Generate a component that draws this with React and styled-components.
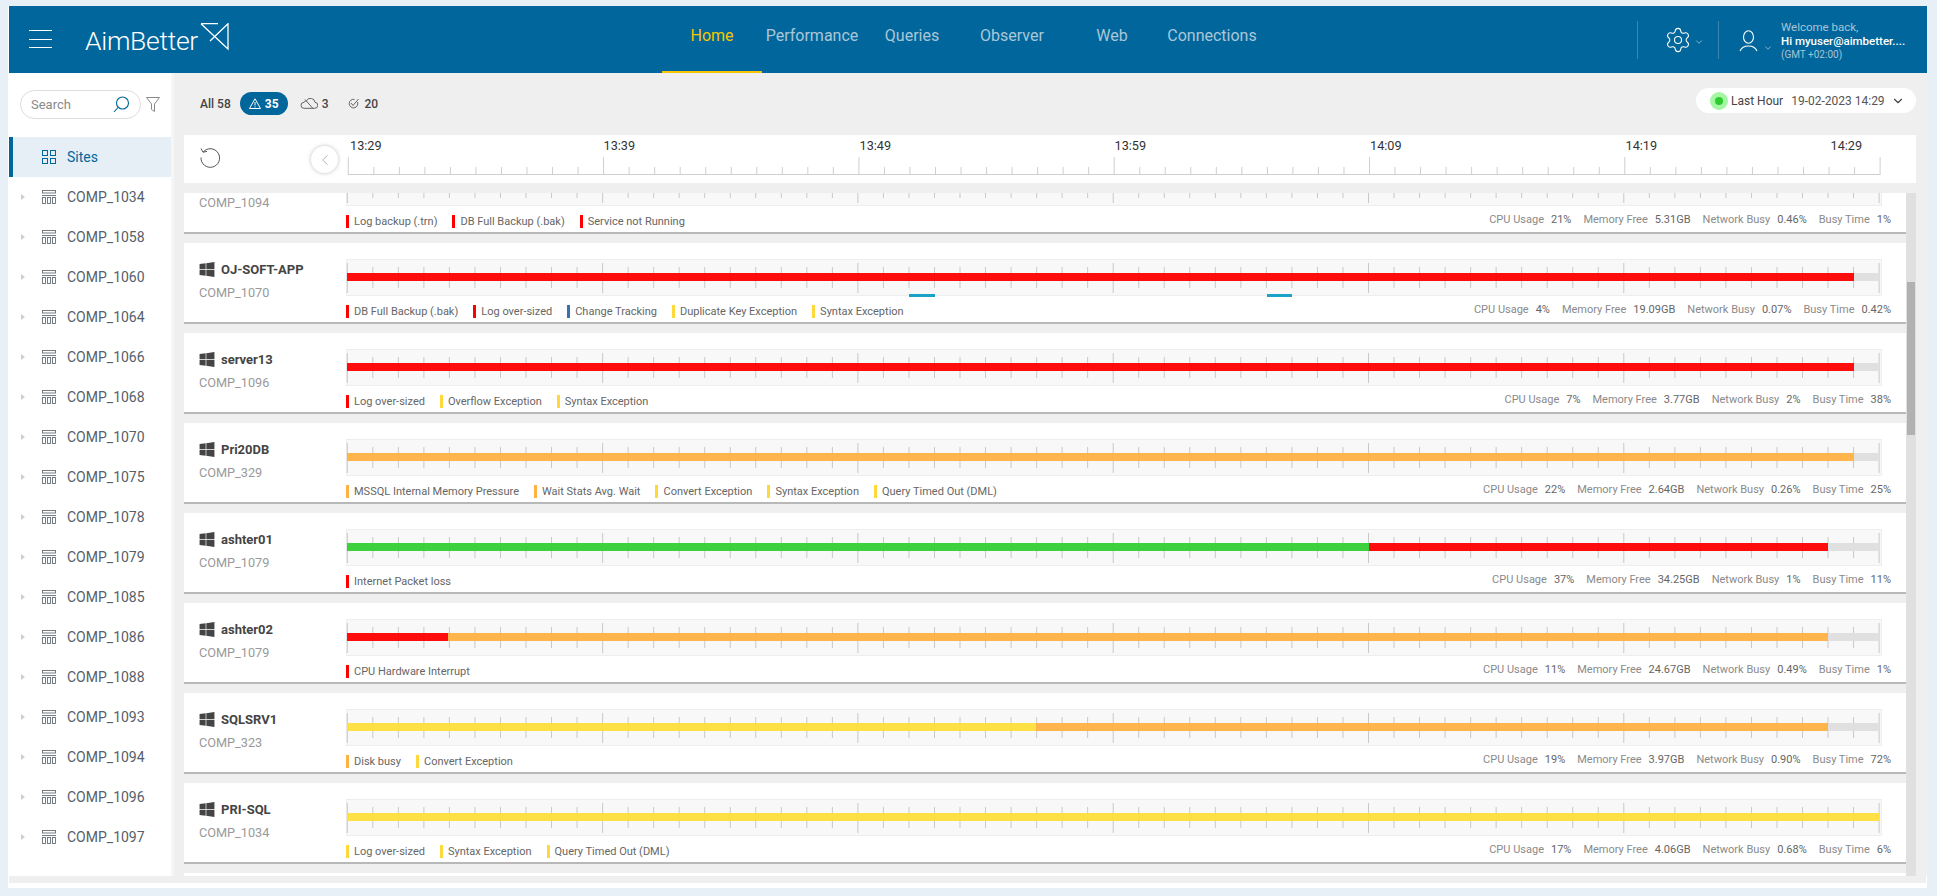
import React from 'react';
import styled, { createGlobalStyle } from 'styled-components';
import { FaWindows } from 'react-icons/fa';
import { Settings, ChevronDown, ChevronLeft } from 'lucide-react';

const Global = createGlobalStyle`
  html, body { margin: 0; padding: 0; height: 100%; overflow: hidden; background: #e7f0f7; }
  body { font-family: Roboto, "Liberation Sans", sans-serif; }
  * { box-sizing: border-box; }
`;

const Page = styled.div`
  width: 1937px; height: 896px; padding: 6px 10px 8px 8px;
`;
const Frame = styled.div`
  width: 1919px; height: 882px; background: #fff; padding-left: 1px;
  display: flex; flex-direction: column;
`;

/* header */
const Header = styled.header`
  height: 67px; flex: none; background: #00669b; display: flex; align-items: stretch; position: relative;
`;
const Burger = styled.div`
  width: 23px; margin: 24px 0 0 20px; height: 18px; flex: none;
  display: flex; flex-direction: column; justify-content: space-between;
  span { display: block; height: 1px; background: #fff; }
`;
const Logo = styled.div`
  margin-left: 33px; width: 145px; flex: none; display: flex; align-items: flex-start; padding-top: 17px;
`;
const LogoText = styled.span`
  font-size: 26.5px; font-weight: 300; color: #fff; letter-spacing: -0.3px; line-height: 36px; width: 115px; flex: none;
`;
const LogoMark = styled.svg`
  width: 30px; height: 30px; margin-top: 0; flex: none;
`;
const Nav = styled.nav`
  margin-left: 432px; display: flex; flex: none;
`;
const NavItem = styled.div`
  width: 100px; height: 67px; padding-top: 20px; text-align: center; font-size: 16px; line-height: 19px;
  color: ${p => (p.$active ? '#f7c600' : '#aac6d9')};
  border-bottom: 2px solid ${p => (p.$active ? '#f7c600' : 'transparent')};
`;
const HeaderRight = styled.div`
  margin-left: 375px; display: flex; flex: none; align-items: flex-start;
`;
const VLine = styled.div`
  width: 1px; height: 38px; margin-top: 15px; background: #3a88b0; flex: none;
`;
const GearWrap = styled.div`
  width: 80px; flex: none; padding: 20px 0 0 26px; display: flex; align-items: flex-start; color: #fff;
`;
const SmallChev = styled.div`
  color: #9fc0d5; display: flex; margin: ${p => p.$m};
`;
const UserWrap = styled.div`
  display: flex; flex: none; align-items: flex-start; padding: 24px 0 0 20px; color: #fff;
`;
const Welcome = styled.div`
  margin-left: 8px; margin-top: -10px; display: flex; flex-direction: column; width: 130px;
`;
const W1 = styled.div` font-size: 11.5px; line-height: 14px; color: #a7c4d7; `;
const W2 = styled.div` font-size: 11.5px; line-height: 14px; color: #fff; font-weight: 500; white-space: nowrap; `;
const W3 = styled.div` font-size: 10px; line-height: 13px; color: #a7c4d7; margin-top: 0; `;

/* body */
const Body = styled.div`
  flex: 1; min-height: 0; display: flex;
`;
const Sidebar = styled.aside`
  width: 165px; flex: none; background: #fff; border-right: 3px solid #f6f6f6; overflow: hidden;
`;
const SearchRow = styled.div`
  display: flex; align-items: center; padding: 17px 0 0 11px; height: 64px; align-items: flex-start;
`;
const SearchBox = styled.div`
  width: 121px; height: 29px; border: 1px solid #ddd; border-radius: 15px; display: flex; align-items: center;
  padding: 0 10px 0 10px; justify-content: space-between; font-size: 13px; color: #8a8a8a;
`;
const FunnelIcon = styled.svg`
  width: 14px; height: 15px; margin: 7px 0 0 5px; flex: none;
`;
const SiteRow = styled.div`
  height: 40px; display: flex; align-items: center; background: ${p => (p.$active ? '#e6eff6' : 'transparent')};
  border-left: 4px solid ${p => (p.$active ? '#00669b' : 'transparent')};
  padding-left: 8px; font-size: 14px; color: ${p => (p.$active ? '#00669b' : '#55606a')};
  width: 162px;
`;
const Caret = styled.span`
  width: 0; height: 0; border-left: 4px solid ${p => (p.$hidden ? 'transparent' : '#cfcfcf')};
  border-top: 3.5px solid transparent; border-bottom: 3.5px solid transparent; flex: none; margin-right: 17px;
`;
const SiteIcon = styled.svg`
  width: 14px; height: 14px; flex: none; margin-right: 11px;
`;

const Main = styled.main`
  flex: 1; min-width: 0; background: #efefef; padding: 0 11px 0 10px; display: flex; flex-direction: column;
`;
const Filters = styled.div`
  height: 62px; flex: none; display: flex; align-items: flex-start; padding: 19px 0 0 16px; font-size: 12px; font-weight: 500; color: #444;
`;
const FilterItem = styled.div`
  display: flex; align-items: center; height: 23px; margin-right: ${p => p.$mr}px; gap: 4px;
`;
const AlertPill = styled.div`
  display: flex; align-items: center; justify-content: center; gap: 4px; width: 48px; height: 23px;
  background: #00669b; border-radius: 12px; color: #fff; font-weight: 700; margin-right: 12px;
`;
const DatePill = styled.div`
  margin-left: auto; margin-top: -4px; width: 220px; height: 25px; border-radius: 13px; background: #fff;
  display: flex; align-items: center; padding-left: 14px; font-size: 12px; font-weight: 400; color: #444; flex: none;
`;
const Halo = styled.span`
  width: 18px; height: 18px; border-radius: 50%; background: #a3f7a3; display: flex; align-items: center; justify-content: center; flex: none; margin-right: 3px;
  &::after { content: ''; width: 8px; height: 8px; border-radius: 50%; background: #2ecb2e; }
`;
const DateText = styled.span` margin-left: 8px; color: #555; white-space: nowrap; `;
const PillChev = styled.span` display: flex; margin-left: 6px; color: #444; `;

const Timeline = styled.div`
  height: 48px; flex: none; background: #fff; display: flex; margin-bottom: 10px;
`;
const Controls = styled.div`
  width: 163px; flex: none; display: flex; align-items: flex-start; padding: 12px 0 0 16px; color: #555;
`;
const BackButton = styled.div`
  width: 27px; height: 27px; border-radius: 50%; background: #fff; box-shadow: 0 0 4px rgba(0,0,0,.25);
  margin: -1px 0 0 90px; display: flex; align-items: center; justify-content: center; color: #999;
`;
const Ruler = styled.svg`
  width: 1540px; height: 48px; flex: none; font-family: Roboto, sans-serif; font-size: 12.7px;
`;

const ListWrap = styled.div`
  flex: 1; min-height: 0; display: flex;
`;
const List = styled.div`
  width: 1722px; flex: none; overflow: hidden; height: 683px; display: flex; flex-direction: column; gap: 9px;
`;
const Scrollbar = styled.div`
  width: 10px; flex: none; height: 683px; background: #e0e0e0; padding: 89px 1px 0;
`;
const Thumb = styled.div`
  height: 153px; background: #b1b1b1;
`;
const RowCard = styled.section`
  height: 81px; flex: none; background: #fff; border-bottom: 2px solid #b8b8b8; display: grid;
  grid-template-columns: 162px 1fr; margin-top: ${p => (p.$clipped ? '-40px' : '0')};
`;
const Info = styled.div`
  padding: 18px 0 0 15px; color: #444;
`;
const NameLine = styled.div`
  display: flex; align-items: center; gap: 6px; height: 17px; font-size: 13px; font-weight: 700; color: #444; line-height: 17px;
  svg { width: 16px; height: 17px; flex: none; }
`;
const Comp = styled.div`
  margin-top: 7px; font-size: 12.7px; line-height: 16px; color: #999;
`;
const RowMain = styled.div`
  padding-top: 16px; padding-right: 15px; display: flex; flex-direction: column;
`;
const ChartBox = styled.div`
  width: 1536px; height: 37px; background: #f8f8f8; border: 1px solid #eee; flex: none;
  svg { display: block; margin: -1px; overflow: visible; }
`;
const Foot = styled.div`
  display: flex; justify-content: space-between; align-items: center; height: 13px; margin-top: 8px; font-size: 11px; white-space: nowrap;
`;
const Legend = styled.div` display: flex; gap: 15px; color: #666; padding-top: 1px; `;
const LegendItem = styled.div`
  display: flex; align-items: center; height: 13px; padding-left: 5px; border-left: 3px solid ${p => p.$c};
`;
const Stats = styled.div` display: flex; gap: 12px; color: #8a8a8a; margin-top: -2px; `;
const Stat = styled.div` display: flex; gap: 7px; b { font-weight: 400; color: #666; } `;
const HBar = styled.div`
  height: 7px; flex: none; background: #efefef; margin-right: 1px;
`;
const BottomGap = styled.div` height: 5px; flex: none; `;

const C = { red: '#ff0000', orange: '#ffb142', yellow: '#ffde3b', green: '#33cf33', blue: '#3a6fb0', tail: '#dedede' };
const LG = { r: '#ff0000', o: '#ffb142', y: '#ffd93b', b: '#3a6fb0' };

const TICKS = Array.from({ length: 61 }, (_, i) => i);
const STEP = 25.53;

const Chart = ({ segs, end = 1533.5, marks = [] }) => {
  let from = 1;
  const rects = segs.map(([color, to], i) => {
    const r = <rect key={i} x={from} y={14} width={to - from} height={8} fill={C[color]} fillOpacity={0.95} />;
    from = to;
    return r;
  });
  return (
    <svg width="1536" height="37" viewBox="0 0 1536 37">
      {TICKS.map(i => {
        const x = 1.3 + i * STEP;
        const major = i % 10 === 0;
        return <line key={i} x1={x} x2={x} y1={major ? 4 : 8} y2={major ? 34 : 29} stroke="#c8c8c8" strokeWidth="1" />;
      })}
      {from < end && <rect x={from} y={14} width={end - from} height={8} fill={C.tail} fillOpacity={0.95} />}
      {rects}
      {marks.map(([a, b]) => <rect key={a} x={a} y={35} width={b - a} height={3} fill="#17a2c6" />)}
    </svg>
  );
};

const Row = ({ name, comp, segs, marks, legend, stats, clipped }) => (
  <RowCard $clipped={clipped}>
    <Info>
      <NameLine><FaWindows />{name}</NameLine>
      <Comp>{comp}</Comp>
    </Info>
    <RowMain>
      <ChartBox><Chart segs={segs} marks={marks} /></ChartBox>
      <Foot>
        <Legend>
          {legend.map(([c, t]) => <LegendItem key={t} $c={LG[c]}>{t}</LegendItem>)}
        </Legend>
        <Stats>
          <Stat>CPU Usage <b>{stats[0]}</b></Stat>
          <Stat>Memory Free <b>{stats[1]}</b></Stat>
          <Stat>Network Busy <b>{stats[2]}</b></Stat>
          <Stat>Busy Time <b>{stats[3]}</b></Stat>
        </Stats>
      </Foot>
    </RowMain>
  </RowCard>
);

const rows = [
  { name: '', comp: 'COMP_1094', clipped: true, segs: [['red', 1508]], legend: [['r', 'Log backup (.trn)'], ['r', 'DB Full Backup (.bak)'], ['r', 'Service not Running']], stats: ['21%', '5.31GB', '0.46%', '1%'] },
  { name: 'OJ-SOFT-APP', comp: 'COMP_1070', segs: [['red', 1508]], marks: [[563, 589], [921, 946]], legend: [['r', 'DB Full Backup (.bak)'], ['r', 'Log over-sized'], ['b', 'Change Tracking'], ['y', 'Duplicate Key Exception'], ['y', 'Syntax Exception']], stats: ['4%', '19.09GB', '0.07%', '0.42%'] },
  { name: 'server13', comp: 'COMP_1096', segs: [['red', 1508]], legend: [['r', 'Log over-sized'], ['y', 'Overflow Exception'], ['y', 'Syntax Exception']], stats: ['7%', '3.77GB', '2%', '38%'] },
  { name: 'Pri20DB', comp: 'COMP_329', segs: [['orange', 1508]], legend: [['o', 'MSSQL Internal Memory Pressure'], ['o', 'Wait Stats Avg. Wait'], ['y', 'Convert Exception'], ['y', 'Syntax Exception'], ['y', 'Query Timed Out (DML)']], stats: ['22%', '2.64GB', '0.26%', '25%'] },
  { name: 'ashter01', comp: 'COMP_1079', segs: [['green', 1023], ['red', 1482]], legend: [['r', 'Internet Packet loss']], stats: ['37%', '34.25GB', '1%', '11%'] },
  { name: 'ashter02', comp: 'COMP_1079', segs: [['red', 102], ['orange', 1482]], legend: [['r', 'CPU Hardware Interrupt']], stats: ['11%', '24.67GB', '0.49%', '1%'] },
  { name: 'SQLSRV1', comp: 'COMP_323', segs: [['yellow', 690], ['orange', 1482]], legend: [['o', 'Disk busy'], ['y', 'Convert Exception']], stats: ['19%', '3.97GB', '0.90%', '72%'] },
  { name: 'PRI-SQL', comp: 'COMP_1034', segs: [['yellow', 1533.5]], legend: [['y', 'Log over-sized'], ['y', 'Syntax Exception'], ['y', 'Query Timed Out (DML)']], stats: ['17%', '4.06GB', '0.68%', '6%'] },
];

const sites = ['1034', '1058', '1060', '1064', '1066', '1068', '1070', '1075', '1078', '1079', '1085', '1086', '1088', '1093', '1094', '1096', '1097'];
const navs = ['Home', 'Performance', 'Queries', 'Observer', 'Web', 'Connections'];
const labels = [['13:29', 3], ['13:39', 256.5], ['13:49', 512.5], ['13:59', 767.5], ['14:09', 1023], ['14:19', 1278.5], ['14:29', 1483.5]];

const TableIcon = () => (
  <SiteIcon viewBox="0 0 14 14" fill="none" stroke="#666f78" strokeWidth="0.9">
    <rect x="0.5" y="0.5" width="13" height="2.5" />
    <path d="M0 5.5h14" />
    <rect x="0.5" y="7.5" width="3" height="6" />
    <rect x="5.5" y="7.5" width="3" height="6" />
    <rect x="10.5" y="7.5" width="3" height="6" />
  </SiteIcon>
);
const GridIcon = () => (
  <SiteIcon viewBox="0 0 14 14" fill="none" stroke="#00669b" strokeWidth="1">
    <rect x="0.5" y="0.5" width="5" height="5" />
    <rect x="8.5" y="0.5" width="5" height="5" />
    <rect x="0.5" y="8.5" width="5" height="5" />
    <rect x="8.5" y="8.5" width="5" height="5" />
  </SiteIcon>
);

export default function App() {
  return (
    <Page>
      <Global />
      <Frame>
        <Header>
          <Burger><span /><span /><span /></Burger>
          <Logo>
            <LogoText>AimBetter</LogoText>
            <LogoMark viewBox="0 0 30 30" fill="none" stroke="#fff" strokeWidth="1.3">
              <path d="M0 0.7 H17 M0 0.7 L27 26 V0.7 L9 18" transform="translate(1 0)" />
            </LogoMark>
          </Logo>
          <Nav>
            {navs.map((n, i) => <NavItem key={n} $active={i === 0}>{n}</NavItem>)}
          </Nav>
          <HeaderRight>
            <VLine />
            <GearWrap>
              <Settings size={28} strokeWidth={0.9} />
              <SmallChev $m="11px 0 0 2px"><ChevronDown size={10} /></SmallChev>
            </GearWrap>
            <VLine />
            <UserWrap>
              <svg width="19" height="22" viewBox="0 0 19 22" fill="none" stroke="#fff" strokeWidth="1.1">
                <ellipse cx="9.5" cy="7" rx="5" ry="6.3" />
                <path d="M1 21c1.5-3.5 4.5-5 8.5-5s7 1.5 8.5 5" />
              </svg>
              <SmallChev $m="13px 0 0 5px"><ChevronDown size={10} /></SmallChev>
              <Welcome>
                <W1>Welcome back,</W1>
                <W2>Hi myuser@aimbetter....</W2>
                <W3>(GMT +02:00)</W3>
              </Welcome>
            </UserWrap>
          </HeaderRight>
        </Header>
        <Body>
          <Sidebar>
            <SearchRow>
              <SearchBox>
                Search
                <svg width="17" height="17" viewBox="0 0 17 17" fill="none" stroke="#00669b" strokeWidth="1.1">
                  <circle cx="9.5" cy="7" r="6" />
                  <path d="M5 11.5 L1 16" />
                </svg>
              </SearchBox>
              <FunnelIcon viewBox="0 0 14 15" fill="none" stroke="#8a8a8a" strokeWidth="1">
                <path d="M0.5 0.5 H13.5 L8.5 7 V14.5 L5.5 12.5 V7 Z" />
              </FunnelIcon>
            </SearchRow>
            <SiteRow $active><Caret $hidden /><GridIcon />Sites</SiteRow>
            {sites.map(s => (
              <SiteRow key={s}><Caret /><TableIcon />COMP_{s}</SiteRow>
            ))}
          </Sidebar>
          <Main>
            <Filters>
              <FilterItem $mr={9}>All 58</FilterItem>
              <AlertPill>
                <svg width="12" height="11" viewBox="0 0 12 11" fill="none" stroke="#fff" strokeWidth="1">
                  <path d="M6 0.8 L11.5 10.5 H0.5 Z M6 4 V7.5 M6 8.5 V9.5" />
                </svg>
                35
              </AlertPill>
              <FilterItem $mr={19}>
                <svg width="18" height="11" viewBox="0 0 18 11" fill="none" stroke="#555" strokeWidth="0.9">
                  <path d="M4 10.3 H14.5 a3 3 0 0 0 0.5-6 a4.5 4.5 0 0 0-8.5-1.5 a3.5 3.5 0 0 0-2.5 1.5 a3 3 0 0 0 0 6 Z M5 1.5 L13 10.5" />
                </svg>
                3
              </FilterItem>
              <FilterItem $mr={0}>
                <svg width="11" height="11" viewBox="0 0 11 11" fill="none" stroke="#555" strokeWidth="0.9" style={{ marginRight: 2 }}>
                  <path d="M9.5 4 A4.3 4.3 0 1 1 6.5 1.4 M3 5 L5 7.5 L10.5 1" />
                </svg>
                20
              </FilterItem>
              <DatePill>
                <Halo />
                Last Hour
                <DateText>19-02-2023 14:29</DateText>
                <PillChev><ChevronDown size={14} /></PillChev>
              </DatePill>
            </Filters>
            <Timeline>
              <Controls>
                <svg width="21" height="21" viewBox="0 0 21 21" fill="none" stroke="#555" strokeWidth="1" style={{ flex: 'none' }}>
                  <path d="M3.2 5 A9.3 9.3 0 1 1 1 10.5 M1 1.5 L3 5.2 L7 4.4" />
                </svg>
                <BackButton><ChevronLeft size={18} strokeWidth={1} /></BackButton>
              </Controls>
              <Ruler viewBox="0 0 1540 48">
                {labels.map(([t, x]) => <text key={t} x={x} y={15} fill="#333">{t}</text>)}
                <line x1="1" x2="1533" y1="39.5" y2="39.5" stroke="#cfcfcf" />
                {TICKS.map(i => {
                  const x = 1.3 + i * STEP;
                  return <line key={i} x1={x} x2={x} y1={i % 10 === 0 ? 22 : 32} y2="40" stroke="#cfcfcf" />;
                })}
              </Ruler>
            </Timeline>
            <ListWrap>
              <List>
                {rows.map(r => <Row key={r.comp + r.name} {...r} />)}
                <RowCard />
              </List>
              <Scrollbar><Thumb /></Scrollbar>
            </ListWrap>
          </Main>
        </Body>
        <HBar />
        <BottomGap />
      </Frame>
    </Page>
  );
}
